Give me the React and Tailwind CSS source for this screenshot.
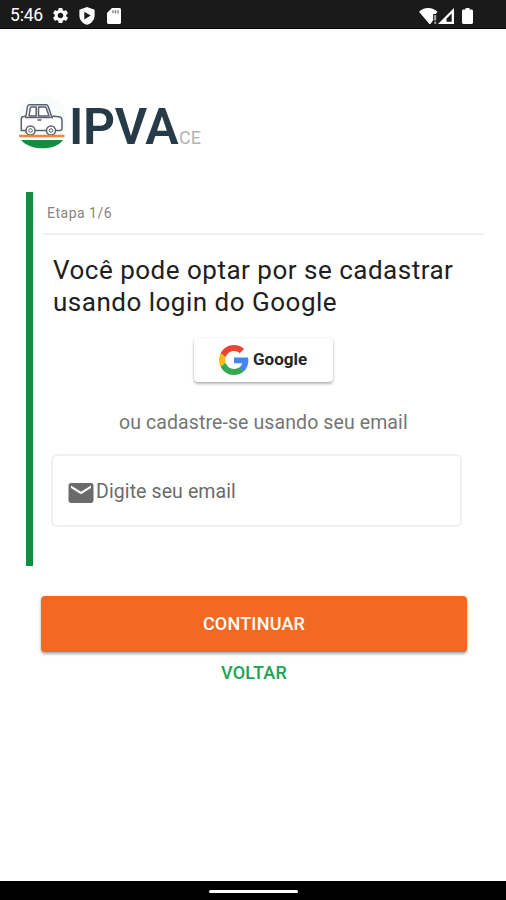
import { MdEmail, MdSettings } from 'react-icons/md';

function StatusBar() {
  return (
    <header className="flex h-[29px] shrink-0 items-center border-b border-black bg-[#1a1a1a] pt-[3px] pl-[10px] text-white">
      <span className="w-[41px] text-[17.500px] leading-none tracking-[-0.2px]">5:46</span>
      <MdSettings className="size-[19px]" />
      {/* Play Protect */}
      <svg className="ml-[9px] h-[18px] w-4" viewBox="0 0 16 18">
        <path d="M8 0l7.600 2.800v5.600c0 4.400-3 8-7.600 9.400C3.400 16.400.4 12.800.4 8.400V2.800z" fill="#fff" />
        <path d="M5.300 4.800v7.600l6.400-3.800z" fill="#1a1a1a" />
      </svg>
      {/* SD card */}
      <svg className="ml-[12px] h-4 w-[14px]" viewBox="0 0 14 16">
        <path d="M5 0h7.500c.8 0 1.500.7 1.500 1.500v13c0 .8-.7 1.500-1.500 1.500h-11C.7 16 0 15.300 0 14.500V5z" fill="#fff" />
        <path d="M5.300 2.200h1.300v3H5.300zM7.800 2.200h1.300v3H7.800zM10.300 2.200h1.300v3h-1.300z" fill="#777" />
      </svg>
      <div className="ml-auto flex items-center pr-[33px]">
        {/* Wi-Fi without internet */}
        <svg className="h-4 w-[19px]" viewBox="0 0 19 16">
          <path d="M0 3.800C2.500 1.400 5.500 0 9.200 0s6.800 1.400 9.300 3.800L16.800 6h-2.600v6.300L11.400 16h-1z" fill="#fff" />
          <path d="M15.200 7h2v5.500h-2zM15.200 13.700h2v2h-2z" fill="#aaa" />
        </svg>
        <svg className="h-4 w-4" viewBox="0 0 16 16">
          <path d="M16 0v16H0z" fill="#fff" />
          <path d="M13.700 5.500v8.200H8.500V10.700z" fill="#1a1a1a" />
        </svg>
        <svg className="ml-2 h-4 w-[11px]" viewBox="0 0 11 16">
          <path d="M3.500 0h4v1.500H9.500c.8 0 1.500.7 1.500 1.500v11.500c0 .8-.7 1.500-1.500 1.500h-8C.7 16 0 15.300 0 14.500V3c0-.8.7-1.500 1.500-1.500h2z" fill="#fff" />
        </svg>
      </div>
    </header>
  );
}

function CarLogo() {
  return (
    <svg className="h-[60px] w-[50px]" viewBox="0 0 50 60">
      <circle cx="25" cy="29" r="25" fill="#fafbfb" />
      <g fill="#fff" stroke="#59616b" strokeWidth="1.500" strokeLinejoin="round">
        <path d="M6.500 39.500H4.300V28c0-1.500.8-2.500 2.500-2.500L9 25l1.500-9.500c.3-1.200 1-1.800 2.300-1.800h16c1.200 0 2 .5 2.400 1.700l3.200 9.600 7.500.8c2 .3 3.100 1.400 3.100 3.300v8.100c0 1.500-.8 2.300-2.300 2.300z" />
        <path d="M12 25l1.200-8c.2-.7.600-1 1.300-1h4.700v9zM21.500 25v-9h6.300c.7 0 1.200.3 1.500 1l2.700 8z" />
        <circle cx="13.500" cy="39.500" r="4.500" />
        <circle cx="34" cy="39.500" r="4.500" />
        <circle cx="13.500" cy="39.500" r="1.800" strokeWidth="1" />
        <circle cx="34" cy="39.500" r="1.800" strokeWidth="1" />
        <path d="M8 26.500h28M20.500 29h4" />
      </g>
      <path d="M2 45h45.500" stroke="#ec8738" strokeWidth="2.500" />
      <path d="M4 48.900h42C42 54.500 34.500 57.300 25.500 57.300S9 54.500 4 48.900z" fill="#10903f" />
    </svg>
  );
}

function GoogleLogo() {
  return (
    <svg className="size-[30px]" viewBox="0 0 48 48">
      <path fill="#ea4335" d="M24 9.500c3.540 0 6.710 1.220 9.210 3.600l6.850-6.850C35.900 2.380 30.470 0 24 0 14.620 0 6.510 5.380 2.560 13.220l7.980 6.190C12.430 13.720 17.740 9.500 24 9.500z" />
      <path fill="#4285f4" d="M46.980 24.550c0-1.570-.15-3.090-.38-4.550H24v9.020h12.940c-.58 2.960-2.260 5.480-4.780 7.180l7.730 6c4.510-4.180 7.090-10.360 7.090-17.650z" />
      <path fill="#fbbc05" d="M10.530 28.590c-.48-1.450-.76-2.990-.76-4.590s.27-3.140.76-4.590l-7.980-6.190C.92 16.460 0 20.120 0 24c0 3.880.92 7.540 2.560 10.780l7.970-6.190z" />
      <path fill="#34a853" d="M24 48c6.480 0 11.930-2.130 15.890-5.810l-7.730-6c-2.150 1.450-4.920 2.300-8.160 2.300-6.260 0-11.570-4.220-13.470-9.910l-7.980 6.190C6.510 42.620 14.620 48 24 48z" />
    </svg>
  );
}

export default function App() {
  return (
    <div className="flex h-[900px] w-[506px] flex-col overflow-hidden bg-white font-['Roboto',sans-serif]">
      <StatusBar />

      <main className="flex flex-1 flex-col">
        <h1 className="mt-[62px] flex h-[60px] items-start pl-[17px]">
          <CarLogo />
          <span className="mt-[11px] ml-[2px] w-[110px] text-[50px] leading-[50px] font-semibold tracking-[-0.3px] whitespace-nowrap text-[#263b47]">IPVA</span>
          <span className="mt-[36px] text-[18px] leading-[22px] whitespace-nowrap text-[#b3b3b3]">CE</span>
        </h1>

        {/* Step content */}
        <section className="mt-[41px] ml-[26px] h-[374px] w-[458px] border-l-7 border-[#0d8f40] pl-[10px]">
          <p className="h-[43px] border-b-2 border-[#f0f0f0] pt-[12px] pl-1 text-[14px] leading-[18px] tracking-[0.5px] text-[#858585]">
            Etapa 1/6
          </p>
          <h2 className="mt-[19px] pl-[10px] text-[26px] leading-8 tracking-[0.5px] whitespace-nowrap text-[#202020]">
            Você pode optar por se cadastrar
            <br />
            usando login do Google
          </h2>
          <button className="mt-[20px] ml-[151px] flex h-[44px] w-[139px] items-center rounded-[4px] bg-white pl-[25px] shadow-[0_2px_3px_rgba(0,0,0,0.28),0_0_2px_rgba(0,0,0,0.12)]">
            <GoogleLogo />
            <span className="ml-1 text-[17px] font-bold whitespace-nowrap text-[#252525]">Google</span>
          </button>
          <p className="mt-[29px] pl-[76px] text-[19.5px] leading-6 tracking-[0.1px] whitespace-nowrap text-[#757575]">
            ou cadastre-se usando seu email
          </p>
          <label className="mt-[19px] ml-2 flex h-[73px] w-[411px] items-center rounded-[6px] border-2 border-[#f0f0f0] pl-[13px] text-[#6b6b6b]">
            <MdEmail className="mt-[5px] size-[30px]" />
            <span className="pt-[2px] text-[19.5px] leading-6 tracking-[0.1px] whitespace-nowrap">Digite seu email</span>
          </label>
        </section>

        <button className="mt-[30px] ml-[41px] h-[56px] w-[426px] rounded-[4px] bg-[#f26921] pb-[2px] text-[18px] font-medium tracking-[0.2px] text-white shadow-[0_2px_3px_rgba(0,0,0,0.35)]">
          CONTINUAR
        </button>
        <button className="mt-[9px] ml-[41px] h-6 w-[426px] text-[18px] leading-6 font-medium tracking-[0.2px] text-[#1ba354]">VOLTAR</button>
      </main>

      {/* System navigation bar */}
      <footer className="flex h-[19px] shrink-0 justify-center bg-black pt-[9px]">
        <div className="h-[3px] w-[89px] rounded-full bg-white" />
      </footer>
    </div>
  );
}
